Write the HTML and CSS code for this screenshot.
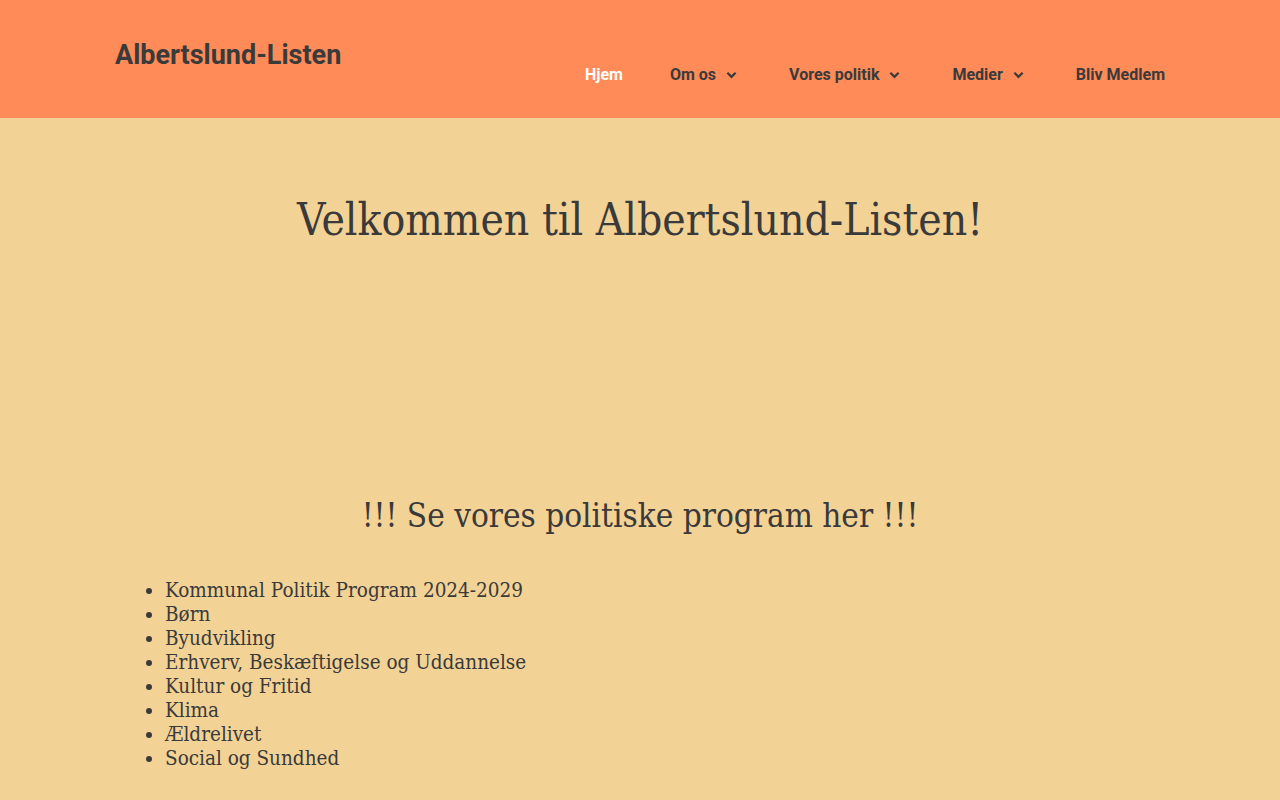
FILE: index.html
```html
<!DOCTYPE html>
<html lang="da">
<head>
<meta charset="utf-8">
<title>Albertslund-Listen</title>
<link rel="stylesheet" href="styles.css">
</head>
<body>
<header class="site-header">
  <div class="header-inner">
    <div class="brand">Albertslund-Listen</div>
    <nav class="main-nav">
      <a class="nav-item active" href="#">Hjem</a>
      <a class="nav-item" href="#">Om os <svg class="chev" viewBox="0 0 12 8" width="11" height="8"><path d="M1.5 1.5 L6 6 L10.5 1.5" fill="none" stroke="currentColor" stroke-width="2.4"/></svg></a>
      <a class="nav-item" href="#">Vores politik <svg class="chev" viewBox="0 0 12 8" width="11" height="8"><path d="M1.5 1.5 L6 6 L10.5 1.5" fill="none" stroke="currentColor" stroke-width="2.4"/></svg></a>
      <a class="nav-item" href="#">Medier <svg class="chev" viewBox="0 0 12 8" width="11" height="8"><path d="M1.5 1.5 L6 6 L10.5 1.5" fill="none" stroke="currentColor" stroke-width="2.4"/></svg></a>
      <a class="nav-item last" href="#">Bliv Medlem</a>
    </nav>
  </div>
</header>
<main class="content">
  <h1 class="welcome">Velkommen til Albertslund-Listen!</h1>
  <div class="spacer"></div>
  <h2 class="program-title">!!! Se vores politiske program her !!!</h2>
  <ul class="program-list">
    <li>Kommunal Politik Program 2024-2029</li>
    <li>Børn</li>
    <li>Byudvikling</li>
    <li>Erhverv, Beskæftigelse og Uddannelse</li>
    <li>Kultur og Fritid</li>
    <li>Klima</li>
    <li>Ældrelivet</li>
    <li>Social og Sundhed</li>
  </ul>
</main>
</body>
</html>
```
FILE: styles.css
```css
html, body {
  margin: 0;
  padding: 0;
}
body {
  background: #f3d296;
  color: #3a3a3a;
  font-family: "DejaVu Serif Condensed", "DejaVu Serif", serif;
  font-stretch: condensed;
  min-height: 800px;
}
.site-header {
  background: #fe8b58;
  height: 118px;
}
.header-inner {
  width: 1050px;
  margin: 0 auto;
  display: flex;
  justify-content: space-between;
  align-items: flex-start;
}
.brand {
  font-family: Roboto, "Liberation Sans", sans-serif;
  font-stretch: normal;
  font-weight: 700;
  font-size: 27px;
  line-height: 36px;
  color: #3a3a3a;
  margin-top: 37px;
}
.main-nav {
  display: flex;
  margin-top: 65px;
  margin-right: -26px;
}
.nav-item {
  font-family: Roboto, "Liberation Sans", sans-serif;
  font-stretch: normal;
  font-weight: 700;
  font-size: 16px;
  line-height: 20px;
  color: #3a3a3a;
  text-decoration: none;
  padding: 0 26px;
  display: flex;
  align-items: center;
}
.nav-item.active {
  color: #ffffff;
  padding: 0 21px 0 27px;
}
.chev {
  margin-left: 10px;
}
.content {
  width: 1050px;
  margin: 0 auto;
}
.welcome {
  margin: 0;
  padding-top: 76px;
  text-align: center;
  font-weight: 400;
  font-size: 44px;
  line-height: 52px;
}
.spacer {
  height: 248px;
}
.program-title {
  margin: 0;
  text-align: center;
  font-weight: 400;
  font-size: 33px;
  line-height: 44px;
}
.program-list {
  margin: 40px 0 0 10px;
  padding-left: 40px;
  font-size: 20.5px;
  line-height: 24px;
}
```
